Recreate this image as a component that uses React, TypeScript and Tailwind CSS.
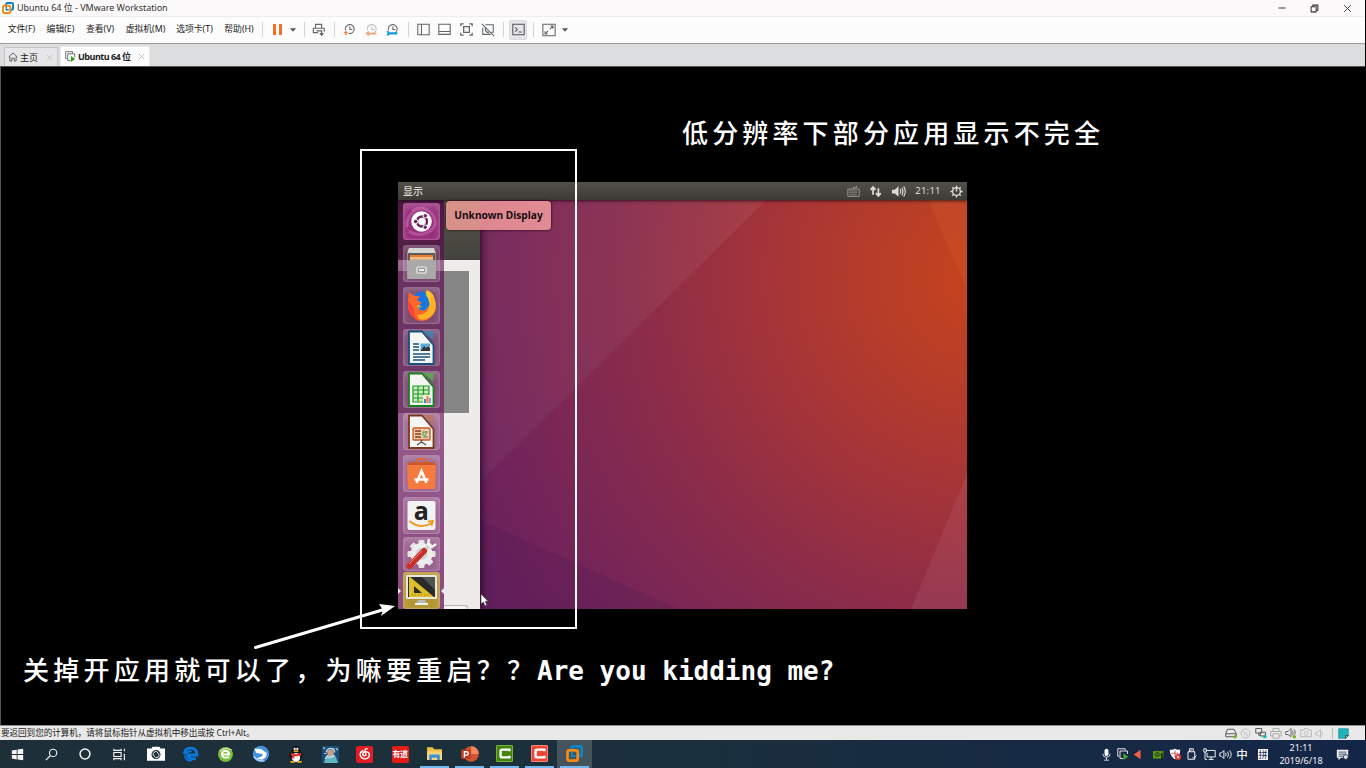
import React from 'react';

type Kids = { children?: React.ReactNode };

const UI = "font-['Noto_Sans','Noto_Sans_CJK_SC',sans-serif]";

function Ico({ s = 16, c = '', children }: Kids & { s?: number; c?: string }) {
  return (
    <svg width={s} height={s} viewBox="0 0 16 16" fill="none" stroke="currentColor" strokeWidth="1" className={`block shrink-0 ${c}`}>
      {children}
    </svg>
  );
}

function Cell({ w, c = '', children }: Kids & { w: string; c?: string }) {
  return <div className={`flex h-full shrink-0 items-center justify-center ${w} ${c}`}>{children}</div>;
}

function VmLogo({ s }: { s: number }) {
  return (
    <Ico s={s}>
      <path d="M5.5 4.5V2.6Q5.5 1.3 6.8 1.3H13.4Q14.7 1.3 14.7 2.6V9Q14.7 10.3 13.4 10.3H11.5" stroke="#0d86c8" strokeWidth="2.6" />
      <rect x="1.4" y="5" width="9.6" height="9.6" rx="1.4" stroke="#f38b14" strokeWidth="2.6" />
      <path d="M5.6 6V10.3H9" stroke="#0d86c8" strokeWidth="1.8" />
    </Ico>
  );
}

const Caret = () => (
  <svg width="6" height="4" viewBox="0 0 6 4" className="block shrink-0"><path d="M0 .3H6L3 3.7Z" fill="#555" /></svg>
);
const Sep = () => <div className="h-[15px] w-px bg-[#d4d4d4]" />;

function Clock({ soft = false, children }: Kids & { soft?: boolean }) {
  return (
    <Ico s={13}>
      <g stroke={soft ? '#b9bec2' : '#666'} strokeWidth="1.3">
        <path d="M3 9A5.5 5.5 0 1 1 7 12.8" />
        <path d="M8.5 4V8H11.5" />
      </g>
      {children}
    </Ico>
  );
}

function TitleBar() {
  return (
    <div className="flex h-[16px] items-center bg-[#fbf9f9] text-[#333]">
      <Cell w="w-[15px]" c="pb-px"><VmLogo s={12} /></Cell>
      <div className="ml-[2px] flex-1 whitespace-nowrap text-[9px] leading-[16px] tracking-[-0.03px]">Ubuntu 64 位 - VMware Workstation</div>
      <Cell w="w-8"><Ico s={8}><path d="M1 8H15" strokeWidth="2" /></Ico></Cell>
      <Cell w="w-8"><Ico s={9}><path d="M2 5H11V14H2ZM5 5V2H14V11H11" strokeWidth="1.8" /></Ico></Cell>
      <Cell w="w-[34px]"><Ico s={9}><path d="M2 2L14 14M14 2L2 14" strokeWidth="1.6" /></Ico></Cell>
      <div className="w-px" />
    </div>
  );
}

function MenuBar() {
  return (
    <div className="flex h-[27px] items-center border-t border-[#eeecec] bg-[#fcfcfc] pb-px text-[8.8px] leading-none whitespace-nowrap text-[#222]">
      <Cell w="w-[43px]">文件(F)</Cell>
      <Cell w="w-[35px]">编辑(E)</Cell>
      <Cell w="w-[44px]">查看(V)</Cell>
      <Cell w="w-[47px]">虚拟机(M)</Cell>
      <Cell w="w-[51px]">选项卡(T)</Cell>
      <Cell w="w-[38px]">帮助(H)</Cell>
      <Cell w="w-[9px]"><Sep /></Cell>
      <Cell w="w-[21px]"><div className="flex gap-[3px]"><i className="h-[11px] w-[3px] bg-[#f0702a]" /><i className="h-[11px] w-[3px] bg-[#f0702a]" /></div></Cell>
      <Cell w="w-[9px]"><Caret /></Cell>
      <Cell w="w-[14px]"><Sep /></Cell>
      <Cell w="w-[16px]" c="text-[#666]">
        <Ico s={14}><path d="M4 6V1.5H11V6M7 11H1.5V6H14V10M5 9H11M11 8V14" strokeWidth="1.3" /><path d="M8.3 11.5H13.7L11 15Z" fill="currentColor" stroke="none" /></Ico>
      </Cell>
      <Cell w="w-[15px]"><Sep /></Cell>
      <Cell w="w-[15px]"><Clock><path d="M1 12H6M3.5 9.5V15" stroke="#f0702a" strokeWidth="1.5" /></Clock></Cell>
      <Cell w="w-[28px]"><Clock soft><path d="M2 13H14M5 10.5L2 13L5 15.5" stroke="#f5a57d" strokeWidth="2" /></Clock></Cell>
      <Cell w="w-[15px]"><Clock><path d="M1.5 10L4 12.5L1.5 15M4 12.7H14" stroke="#12a0d4" strokeWidth="2.6" /></Clock></Cell>
      <Cell w="w-[16px]"><Sep /></Cell>
      <Cell w="w-[14px]" c="text-[#606468]"><Ico s={13}><path d="M1 1.5H15V14.5H1ZM5.5 1.5V14.5" strokeWidth="1.3" /></Ico></Cell>
      <Cell w="w-[29px]" c="text-[#606468]"><Ico s={13}><path d="M1 1.5H15V14H1ZM1 10.5H15" strokeWidth="1.3" /></Ico></Cell>
      <Cell w="w-[14px]" c="text-[#606468]"><Ico s={13}><path d="M1 4V1H4.5M11.5 1H15V4M15 12V15H11.5M4.5 15H1V12M4.5 4.5H11.5V11.5H4.5Z" strokeWidth="1.5" /></Ico></Cell>
      <Cell w="w-[29px]" c="text-[#606468]"><Ico s={14}><path d="M1 1L15 15M5 2H14V10.5H12M2 5V13H11M5 5V8Q6 11 9 11" strokeWidth="1.2" /></Ico></Cell>
      <Cell w="w-[2px]"><Sep /></Cell>
      <Cell w="w-[28px]" c="text-[#4f5357]">
        <div className="flex h-[20px] w-[18px] items-center justify-center rounded-[2px] border border-[#dcdce0] bg-[#e6e6ea]">
          <Ico s={13}><path d="M1 1.5H15V14.5H1ZM4 5.5L6.5 8L4 10.5M8 11H12" strokeWidth="1.3" /></Ico>
        </div>
      </Cell>
      <Cell w="w-[3px]"><Sep /></Cell>
      <Cell w="w-[28px]" c="text-[#606468]"><Ico s={14}><path d="M1 1.5H15V14.5H1ZM9 7L12.5 3.5M9.5 3.5H12.5V6.5M7 9L3.5 12.5M3.5 9.5V12.5H6.5" strokeWidth="1.2" /></Ico></Cell>
      <Cell w="w-[3px]"><Caret /></Cell>
    </div>
  );
}

function TabBar() {
  return (
    <div className="flex h-6 items-end border-t border-t-[#999b9c] border-b border-b-[#555] bg-[#dcdddf] pl-1 text-[9px] leading-none whitespace-nowrap text-[#222]">
      <div className="flex h-[19px] w-[54px] items-center border border-b-0 border-[#c3c4c6] bg-[#e7e7e9] pl-[3px]">
        <Ico s={10} c="text-[#555]"><path d="M1 8L8 1.5L15 8M3 7V14.5H6V10H10V14.5H13V7" strokeWidth="1.4" /></Ico>
        <span className="ml-[2px]">主页</span>
        <Ico s={7} c="ml-[8px] text-[#bbb]"><path d="M2 2L14 14M14 2L2 14" strokeWidth="2" /></Ico>
      </div>
      <div className="ml-[2px] flex h-5 w-[90px] items-center border border-b-0 border-[#e9e9ea] bg-[#fdfdfd] pl-[4px]">
        <Ico s={11} c="text-[#555]"><path d="M11 3V1H1V11H3M4 4H14V9M4 4V14H8" strokeWidth="1.2" /><path d="M8.5 7L15 11.5L8.5 16Z" fill="#3b9a28" stroke="none" /></Ico>
        <b className="ml-[2px] text-[9px] tracking-[-0.48px]">Ubuntu 64 位</b>
        <Ico s={7} c="ml-[7px] text-[#aaa]"><path d="M2 2L14 14M14 2L2 14" strokeWidth="1.7" /></Ico>
      </div>
    </div>
  );
}

function Tile({ children, bg = 'bg-white/10', h = 'h-[37px]', mt = 'mt-[5px]' }: Kids & { bg?: string; h?: string; mt?: string }) {
  return (
    <div className={`flex w-[37px] shrink-0 items-center justify-center rounded-[3px] border border-white/20 ${bg} ${h} ${mt} shadow-[inset_0_3px_7px_rgba(255,255,255,0.24)]`}>
      <svg width="35" height="35" viewBox="0 0 35 35" className="shrink-0 overflow-visible">{children}</svg>
    </div>
  );
}

function Doc({ c, fold, children }: Kids & { c: string; fold: string }) {
  return (
    <>
      <path d="M19 1H29.5V10Z" fill={fold} opacity=".8" />
      <path d="M5 1.5H18L29.5 15V34H5Z" fill="#f5f5f3" stroke={c} strokeWidth="1.8" strokeLinejoin="round" />
      {children}
    </>
  );
}

const spokes = [0, 45, 90, 135, 180, 225, 270, 315];

function Launcher() {
  return (
    <div className="relative flex w-[46px] shrink-0 flex-col items-center bg-[linear-gradient(180deg,#4b193f_0,#55204a_60px,#98658d_60px,#98658d_71px,#6a3160_71px,#733b69_213px,#965c8b_213px,#8c4a80_100%)]">
      <Tile bg="bg-[#982c7b]" mt="mt-[3px]">
        <path d="M3 23C3 11 10 4 21 4M5 27C12 33 28 31 31 20M8 7C18 0 32 7 31 21" fill="none" stroke="#e6a9d7" strokeWidth="3" opacity=".3" />
        <circle cx="17.5" cy="17.5" r="10.3" fill="#fff" />
        <circle cx="18" cy="17.5" r="5" fill="none" stroke="#6c205b" strokeWidth="2.4" />
        <g fill="#6c205b" stroke="#fff" strokeWidth="1"><circle cx="11.6" cy="17.5" r="2.2" /><circle cx="21.2" cy="11.8" r="2.2" /><circle cx="21.2" cy="23.2" r="2.2" /></g>
      </Tile>
      <Tile>
        <path d="M5 2H30L31.5 6V33H3.5V6Z" fill="#d5d5d3" />
        <path d="M4 7H31V16H4Z" fill="#5e5a56" />
        <path d="M6 9H29V15H6Z" fill="#e57b35" /><path d="M6 11H29V15H6Z" fill="#f4bd7f" />
        <path d="M3.5 15L6 13.5H29L31.5 15V33H3.5Z" fill="#aaa9a8" />
        <rect x="13" y="21" width="9" height="6" rx="1" fill="#999" stroke="#f1f1f1" strokeWidth="1.2" /><path d="M15 24H20" stroke="#eee" strokeWidth="2" />
      </Tile>
      <Tile>
        <circle cx="18" cy="18" r="14" fill="#fc652a" />
        <circle cx="18" cy="14" r="10.5" fill="#1976e1" />
        <path d="M11 17Q16 16 18 20L14 18Q17 26 24 24L27 17L31 15Q31 5 23 2Q20 5 24 10L26 17L19 25Z" fill="#ffc527" />
        <path d="M4 12L5 4L10 8L16 8L13 12L18 15L13 18Q15 24 21 22Q26 19 26 16L31 19Q29 33 17 33Q3 31 4 12Z" fill="#fb6728" />
        <path d="M13 27Q27 27 26 9L30 9Q35 23 26 29Q21 33 15 31Z" fill="#ffb322" />
        <path d="M4 13Q3 29 15 33Q9 28 10 21L6 15Z" fill="#f24438" />
      </Tile>
      <Tile>
        <Doc c="#17507c" fold="#3a87b5">
          <path d="M9 14H15M9 17H15M9 20H15M9 24H26M9 27H26M9 30H21" stroke="#135584" strokeWidth="1.5" />
          <rect x="16.5" y="13.5" width="9.5" height="7.5" fill="#5aa9d7" /><path d="M16.5 21L20 16L22 18L24 16.5L26 18V21Z" fill="#333" />
        </Doc>
      </Tile>
      <Tile>
        <Doc c="#19801f" fold="#52b446">
          <path d="M9 14H25V30H9Z" fill="#c6efbd" /><path d="M9 14H25V30H9ZM9 18H25M9 22H25M9 26H25M14 14V30M19.5 14V30" fill="none" stroke="#28962b" strokeWidth="1.2" />
          <rect x="19" y="23" width="8" height="8" fill="#f6eee1" /><path d="M21 31V27" stroke="#4285c7" strokeWidth="2" /><path d="M23.5 31V24" stroke="#f27b2b" strokeWidth="2" /><path d="M26 31V26" stroke="#4285c7" strokeWidth="1.4" />
        </Doc>
      </Tile>
      <Tile>
        <Doc c="#7d391c" fold="#be7751">
          <rect x="9" y="14" width="17" height="12" rx="1" fill="#f4caa8" stroke="#c25a27" strokeWidth="1.3" />
          <path d="M11 17H17M11 20H17M11 23H17" stroke="#86401f" strokeWidth="1.5" /><path d="M19 22V18H23L20 23H24" stroke="#6ba66b" strokeWidth="1.3" fill="none" /><path d="M17.5 26V28M13 31L17.5 28L22 31" stroke="#555" strokeWidth="1.4" fill="none" />
        </Doc>
      </Tile>
      <Tile>
        <path d="M13 9V5Q13 3 15 3H20Q22 3 22 5V9" fill="none" stroke="#df6538" strokeWidth="2" />
        <path d="M5 6H30L32 9H3Z" fill="#c9592e" /><path d="M3 9H32L31 33H4Z" fill="#f57a3e" />
        <path d="M12.5 27L17.5 15L22.5 27M10.5 23.5H24.5" fill="none" stroke="#fff" strokeWidth="2.5" />
      </Tile>
      <Tile>
        <rect x="3.5" y="3" width="28" height="29" rx="2" fill="#f3f3f3" />
        <text x="17.2" y="22" textAnchor="middle" fontSize="25" fontWeight="bold" fontFamily="Open Sans, sans-serif" fill="#242424">a</text>
        <path d="M5.5 23Q16 32 28 25M24 23.5L29 23L27.5 28" fill="none" stroke="#f39a1e" strokeWidth="1.8" />
      </Tile>
      <Tile h="h-[34px]" mt="mt-[3px]">
        {spokes.map((a) => <rect key={a} x="14.5" y="3" width="6" height="8" rx="1" fill="#e5e5e5" transform={`rotate(${a} 17.5 17)`} />)}
        <circle cx="17.5" cy="17" r="8.5" fill="#d3d3d2" stroke="#ededed" strokeWidth="5" />
        <path d="M21 13L26 8" stroke="#d5d5d5" strokeWidth="4" /><path d="M25 2L24 7L28 10L32 7" fill="none" stroke="#f1f1f1" strokeWidth="2.5" />
        <path d="M5.5 29L20 14" stroke="#c72f29" strokeWidth="6" strokeLinecap="round" /><path d="M5 27L18 14" stroke="#f28474" strokeWidth="1" />
      </Tile>
      <Tile bg="bg-[#b49531]" mt="mt-px">
        <path d="M14 27H21L23 31H12Z" fill="#b9b9b5" /><path d="M11 31H24" stroke="#eee" strokeWidth="2" />
        <rect x="2" y="2" width="31" height="24" rx="1.5" fill="#e7e7e2" /><rect x="4" y="4" width="27" height="20" fill="#292b2a" /><path d="M18 4H31V17Z" fill="#515351" />
        <path fillRule="evenodd" d="M5 3V24H30ZM10 13V20H18Z" fill="#dfbe27" /><path d="M8 22H26" stroke="#8c7517" strokeDasharray="1 2" />
      </Tile>
      <i className="absolute bottom-[15px] left-0 border-y-[3px] border-l-[3px] border-y-transparent border-l-[#eee]" />
      <i className="absolute right-0 bottom-[15px] border-y-[3px] border-r-[3px] border-y-transparent border-r-[#eee]" />
    </div>
  );
}

function Wallpaper() {
  return (
    <svg className="absolute inset-0 block" width="569" height="427" viewBox="0 0 569 427">
      <defs>
        <radialGradient id="warm" gradientUnits="userSpaceOnUse" cx="585" cy="95" r="580">
          <stop offset="0" stopColor="#c6431c" /><stop offset=".17" stopColor="#b93e28" /><stop offset=".38" stopColor="#a43439" />
          <stop offset=".6" stopColor="#8b2c4a" /><stop offset=".83" stopColor="#762558" /><stop offset="1" stopColor="#68215e" />
        </radialGradient>
        <linearGradient id="facet" x1="0" x2="1"><stop offset="0" stopColor="#fff" stopOpacity=".03" /><stop offset="1" stopColor="#fff" stopOpacity=".055" /></linearGradient>
      </defs>
      <path d="M0 0H569V427H0Z" fill="url(#warm)" />
      <path d="M0 18H368L82 300V18Z" fill="url(#facet)" />
      <path d="M530 18H569V108Z" fill="#ef873a" opacity=".12" />
      <path d="M569 292V427H513Z" fill="#e6a2ba" opacity=".1" />
      <path d="M82 338L280 427H82Z" fill="#34104d" opacity=".12" />
    </svg>
  );
}

function GuestDesktop() {
  return (
    <div className="relative h-[427px] w-[569px] overflow-hidden">
      <Wallpaper />
      <div className="relative z-10 flex h-[18px] items-center bg-[linear-gradient(#514f48,#3c3b37)] pl-[5px] text-[10px] text-[#dfdbd2] shadow-[0_1px_3px_rgba(20,0,20,0.7)]">
        <span className="flex-1 leading-none font-medium">显示</span>
        <Cell w="w-6" c="text-[#aaa79f]"><Ico s={13}><path d="M1 5H15V14H1ZM8 5V3H12V1" /><path d="M3 7.5H13M3 9.5H13M4 12H12" strokeDasharray="1.5 1" strokeWidth="1.3" /></Ico></Cell>
        <Cell w="w-[21px]"><Ico s={13}><path d="M5 12V3M2 6L5 2.5L8 6M11.5 4V13M8.5 10L11.5 13.5L14.5 10" strokeWidth="2.2" /></Ico></Cell>
        <Cell w="w-[25px]"><Ico s={15}><path d="M1 6H4L8 2.5V13.5L4 10H1Z" fill="currentColor" stroke="none" /><path d="M9.5 5.5Q11.5 8 9.5 10.5M11.5 4Q14 8 11.5 12M13.5 2.5Q17 8 13.5 13.5" strokeWidth="1.2" /></Ico></Cell>
        <Cell w="w-[34px]"><span className="text-[9.6px] tracking-[0.2px]">21:11</span></Cell>
        <Cell w="w-[22px]">
          <Ico s={13}><circle cx="8" cy="8" r="4.8" strokeWidth="1.7" /><path d="M8 1V8M8 13V15.5M.5 8H3M13 8H15.5M2.8 2.8L4.5 4.5M13.2 2.8L11.5 4.5M2.8 13.2L4.5 11.5M13.2 13.2L11.5 11.5" strokeWidth="1.8" /></Ico>
        </Cell>
      </div>
      <div className="relative flex h-[409px]">
        <Launcher />
        <div className="flex w-[36px] flex-col overflow-hidden bg-[#eeeceb] shadow-[1px_0_8px_rgba(20,0,30,0.9)]">
          <div className="h-[60px] bg-[linear-gradient(#55574a,#43423d)]" />
          <div className="mt-[11px] h-[142px] w-[25px] bg-[#868686]" />
          <div className="mt-auto h-1 w-6 rounded-tr-[3px] border-t border-r border-[#b5b3b1] bg-[#f5f4f3]" />
        </div>
      </div>
      <div className="absolute top-[19px] left-[48px] z-20 flex h-[29px] w-[105px] items-center justify-center rounded-[4px] bg-[linear-gradient(90deg,#d8918a_0,#d8918a_33px,#de8791_34px,#e18b95_100%)] text-[10.2px] font-bold whitespace-nowrap text-[#1a0d10] shadow-[0_0_2px_1px_rgba(30,0,20,0.55)]">Unknown Display</div>
      <svg className="absolute top-[411px] left-[82px]" width="9" height="14" viewBox="0 0 9 14"><path d="M1 1V11L3.3 9L5 13L6.8 12L5.2 8.3H8.2Z" fill="#fff" stroke="#333" strokeWidth=".6" /></svg>
    </div>
  );
}

function VmScreen() {
  return (
    <div className="relative h-[658px] border-l border-[#555] bg-black">
      <div className="flex pt-[115px] pl-[397px]"><GuestDesktop /></div>
      <div className="absolute top-[82px] left-[359px] z-20 h-[480px] w-[217px] border-2 border-white" />
      <svg className="absolute top-[530px] left-[250px] z-30" width="150" height="60" viewBox="0 0 150 60">
        <path d="M4.5 50.5L133 12.5" stroke="#fff" strokeWidth="3" strokeLinecap="round" /><path d="M144 9L128 7L132 13L130 19Z" fill="#fff" />
      </svg>
      <div className="absolute top-[45px] left-[681px] font-['Noto_Sans_CJK_SC',sans-serif] text-[26px] leading-10 font-medium tracking-[4.15px] whitespace-nowrap text-white">低分辨率下部分应用显示不完全</div>
      <div className="absolute top-[582px] left-[22px] flex items-baseline leading-10 whitespace-nowrap text-white">
        <span className="w-[514px] font-['Noto_Sans_CJK_SC',sans-serif] text-[26px] font-medium tracking-[4.25px]">关掉开应用就可以了，为嘛要重启？？</span>
        <span className="font-['DejaVu_Sans_Mono',monospace] text-[26px] font-bold">Are you kidding me?</span>
      </div>
    </div>
  );
}

function StatusBar() {
  return (
    <div className="flex h-[15px] items-center border-t border-[#8e8e8e] bg-[#e9e9e9] text-[8.6px] leading-none text-[#222]">
      <span className="flex-1 pl-px tracking-[-0.06px] whitespace-nowrap">要返回到您的计算机，请将鼠标指针从虚拟机中移出或按 Ctrl+Alt。</span>
      <Cell w="w-[15px]" c="text-[#555]"><Ico s={12}><path d="M3 3H12L15 9V13H1V9ZM1 9H15" strokeWidth="1.3" /><circle cx="13.5" cy="13" r="2.3" fill="#75b51d" stroke="none" /></Ico></Cell>
      <Cell w="w-[15px]" c="text-[#b6b6b6]"><Ico s={11}><circle cx="8" cy="8" r="6.5" strokeWidth="1.3" /><circle cx="8" cy="8" r="2" /><path d="M3 3L7 7M9 9L13 13" /></Ico></Cell>
      <Cell w="w-[15px]" c="text-[#555]"><Ico s={12}><path d="M1 2H9V8H1ZM5 8V11H8M7 7H14V12H7Z" strokeWidth="1.3" /><circle cx="13" cy="12.5" r="2.5" fill="#21b7bd" stroke="none" /></Ico></Cell>
      <Cell w="w-[15px]" c="text-[#aaa]"><Ico s={12}><path d="M4 6V2H12V6M4 12H1V6H15V12H12M4 9H12V15H4Z" strokeWidth="1.3" /></Ico></Cell>
      <Cell w="w-[15px]" c="text-[#666]"><Ico s={12}><path d="M1 6H4L8 2V13L4 10H1ZM10 5Q12 8 10 11M12 3Q15 7 13 10" strokeWidth="1.3" /><circle cx="12.5" cy="13" r="2.3" fill="#75b51d" stroke="none" /></Ico></Cell>
      <Cell w="w-[15px]" c="text-[#b6b6b6]"><Ico s={12}><path d="M1 4H5L6 2H10L11 4H15V13H1Z" strokeWidth="1.3" /><circle cx="8" cy="8.5" r="2.5" /></Ico></Cell>
      <Cell w="w-[15px]" c="text-[#b6b6b6]"><Ico s={11}><path d="M1 6H4L8 2V14L4 10H1ZM10 5Q12 8 10 11" strokeWidth="1.3" /></Ico></Cell>
      <Cell w="w-[8px]"><i className="h-[11px] w-px bg-[#bbb]" /></Cell>
      <Cell w="w-[15px]"><Ico s={11}><path d="M1 1H15V11L11 15H1Z" fill="#20b5bb" stroke="#168c91" /><path d="M15 11H11V15Z" fill="#d6f5f5" /></Ico></Cell>
      <div className="w-[14px]" />
    </div>
  );
}

function Bubble({ c }: { c: string }) {
  return (
    <div className={`flex size-[17px] items-center justify-center rounded-[1px] border ${c}`}>
      <Ico s={13}><path d="M14 5.2V3.2H5Q3.2 3.2 3.2 5V11Q3.2 12.8 5 12.8H14V10.8" stroke="#fff" strokeWidth="3" /></Ico>
    </div>
  );
}

function Running({ children, c = '' }: Kids & { c?: string }) {
  return (
    <div className={`flex h-full w-[35px] shrink-0 flex-col items-center ${c}`}>
      <div className="flex flex-1 items-center pt-px">{children}</div>
      <i className="h-[2px] w-[29px] bg-[#71b9f2]" />
    </div>
  );
}

function Taskbar() {
  return (
    <div className="flex h-7 items-center bg-[linear-gradient(90deg,#1d2f39_0,#1b303c_45%,#172a43_75%,#142648_100%)] text-[#f4f4f4]">
      <Cell w="w-[34px]"><Ico s={13}><path d="M1 3L7 2V7.5H1ZM8 1.8L15 1V7.5H8ZM1 8.5H7V14L1 13ZM8 8.5H15V15L8 14.2Z" fill="currentColor" stroke="none" /></Ico></Cell>
      <Cell w="w-[34px]"><Ico s={13}><circle cx="10" cy="6" r="4.5" strokeWidth="1.4" /><path d="M6.8 9.2L1 15" strokeWidth="1.4" /></Ico></Cell>
      <Cell w="w-[34px]"><Ico s={12}><circle cx="8" cy="8" r="6.6" strokeWidth="2" /></Ico></Cell>
      <Cell w="w-[34px]"><Ico s={13}><path d="M1 1V3H10V1M1 15V13H10V15M1 5.5H10V10.5H1ZM14 1V4M14 7V15" strokeWidth="1.4" /></Ico></Cell>
      <Cell w="w-[39px]"><Ico s={18}><path d="M0 3H4L5 1.5H11L12 3H16V14H0Z" fill="#fff" stroke="none" /><circle cx="8" cy="8.5" r="4" fill="#1d2f39" stroke="none" /><path d="M5.5 9A2.8 2.8 0 0 1 8.5 5.7L11 9Q10 11.5 8 11.3Z" fill="#1d2f39" stroke="#fff" strokeWidth=".8" /></Ico></Cell>
      <Cell w="w-[31px]"><Ico s={17}><path d="M2 7Q3 2 8 2Q14 2 14 8V8.5H5.5Q6 13 13 11.7" stroke="#0b78db" strokeWidth="2.8" /><path d="M2 8Q4 5 9 5M3 9Q3 14 9 14" stroke="#0b78db" strokeWidth="1.8" /></Ico></Cell>
      <Cell w="w-[39px]"><Ico s={17}><circle cx="8" cy="8" r="7" fill="#78bd3b" stroke="none" /><path d="M4.5 8H11.5Q11 4.5 8 4.5T4.5 8Q5 12 11.5 10.5" stroke="#fff" strokeWidth="1.8" /><path d="M2 5Q8 0 14 4" stroke="#c8e99a" /></Ico></Cell>
      <Cell w="w-[31px]"><Ico s={18}><circle cx="8" cy="8" r="7.3" fill="#4492df" stroke="none" /><path d="M2 3L8 3.5L13 7Q13.5 11 9 13L4 12L9 10L9.5 8L4 7Z" fill="#fff" stroke="none" /><path d="M1.5 10Q5 15 11 14" stroke="#acd6fb" strokeWidth="1.2" /></Ico></Cell>
      <Cell w="w-[39px]"><Ico s={18}><ellipse cx="8" cy="9" rx="6" ry="5.5" fill="#15191c" stroke="none" /><circle cx="8" cy="4.3" r="3.8" fill="#15191c" stroke="none" /><ellipse cx="8" cy="11" rx="3.7" ry="4" fill="#fff" stroke="none" /><circle cx="6.8" cy="3.5" r="1" fill="#fff" stroke="none" /><circle cx="9.2" cy="3.5" r="1" fill="#fff" stroke="none" /><path d="M6 5.5H10" stroke="#f5b520" strokeWidth="1.3" /><path d="M3.5 8Q8 10 12.5 8M5.5 9V12" stroke="#e53431" strokeWidth="2" /><path d="M3 15H7M9 15H13" stroke="#f5a91e" strokeWidth="1.7" /></Ico></Cell>
      <Cell w="w-[31px]"><Ico s={17}><path d="M0 0H16V16H0Z" fill="#19507b" stroke="none" /><path d="M2 16L4 9L8 7L13 10L15 16Z" fill="#5fb7c6" stroke="none" /><circle cx="8" cy="6.5" r="3" fill="#ca9f86" stroke="none" /><path d="M4 6Q5 1 11 3L12 6M6 11L12 9M3 12L6 9" stroke="#d0d9df" strokeWidth="1.4" /><path d="M1 2H3M13 2L15 4M2 7H4" stroke="#a9dced" /></Ico></Cell>
      <Cell w="w-[37px]"><div className="flex size-[17px] items-center justify-center rounded-[2px] bg-[#e31b25]"><Ico s={14}><path d="M6 4Q2 6 2.5 9.5Q4 14 8.5 13.5Q13 13 13 8.5Q12 5 8 5.3Q5 6 5.5 9Q7 11 9 9.5L8 3.5Q8 1.5 11 2" stroke="#fff" strokeWidth="1.6" /></Ico></div></Cell>
      <Cell w="w-[34px]"><div className="flex size-[17px] items-center justify-center rounded-[2px] bg-[#e31c18] text-[8px] leading-none font-bold tracking-[-0.5px] whitespace-nowrap text-white">有道</div></Cell>
      <Running><Ico s={17}><path d="M1 2H6L8 4H15V14H1Z" fill="#f5bd42" stroke="none" /><path d="M1 6H15V14H1Z" fill="#fbd574" stroke="none" /><path d="M3 14V9H13V14H10.5V12H5.5V14Z" fill="#3e91dc" stroke="none" /></Ico></Running>
      <Running><Ico s={18}><circle cx="9" cy="8" r="6.8" fill="#d4512f" stroke="none" /><path d="M9 1.2A6.8 6.8 0 0 1 15.8 8H9Z" fill="#f28761" stroke="none" /><rect x="0" y="4" width="8.5" height="8.5" rx="1" fill="#b93a20" stroke="none" /><path d="M3 11V6H5Q6.5 6 6.5 7.5T5 9H3" stroke="#fff" strokeWidth="1.2" /></Ico></Running>
      <Running><Bubble c="border-[#79ae3b] bg-[#41860b]" /></Running>
      <Running><Bubble c="border-[#f28672] bg-[#e94835]" /></Running>
      <Running c="bg-[#44535c]"><VmLogo s={17} /></Running>
      <div className="flex-1" />
      <Cell w="w-[18px]"><Ico s={13}><rect x="5.5" y="1" width="5" height="9" rx="2.5" fill="currentColor" stroke="none" /><path d="M3.5 7Q3.5 11.5 8 11.5T12.5 7M8 11.5V15M5 15H11" /></Ico></Cell>
      <Cell w="w-4"><Ico s={12}><path d="M11 3V1H1V11H3M4 4H14V8M4 4V14H8" strokeWidth="1.2" /><path d="M8.5 7L15 11.5L8.5 16Z" fill="#43aa31" stroke="none" /></Ico></Cell>
      <Cell w="w-[15px]"><Ico s={11}><path d="M1 8L11 1V15Z" fill="#f0613f" stroke="none" /></Ico></Cell>
      <Cell w="w-6"><Ico s={11}><path d="M0 3H15V14H0Z" fill="#5c9810" stroke="none" /><path d="M2 8Q6 3 11 8Q6 13 2 8M6 5V11" stroke="#1d361b" strokeWidth="1.2" /><path d="M13 6V15" stroke="#111" strokeWidth="2" /></Ico></Cell>
      <Cell w="w-[10px]"><Ico s={12}><path d="M1 2Q5 3 8 1Q11 3 15 2Q15 11 8 15Q1 11 1 2Z" fill="#fff" stroke="none" /><path d="M8 3V13M3 7H13" stroke="#c33" /><circle cx="12" cy="12" r="4" fill="#df3b34" stroke="none" /><path d="M10.5 10.5L13.5 13.5M13.5 10.5L10.5 13.5" stroke="#fff" /></Ico></Cell>
      <Cell w="w-[22px]"><Ico s={12}><path d="M6 5V1H11V5M4 5H13V15H4ZM8 2V4M10 12L12 14L15 10" strokeWidth="1.3" /></Ico></Cell>
      <Cell w="w-[14px]"><Ico s={13}><path d="M4 3H15V11H5V6M1 1V5H4V1ZM10 11V14M7 14H13M2.5 5V14H5" strokeWidth="1.2" /></Ico></Cell>
      <Cell w="w-[18px]"><Ico s={13}><path d="M1 6H3L6 3V13L3 10H1ZM8 6Q9.5 8 8 10M10.5 4.5Q13 8 10.5 11.5M13 3Q17 8 13 13" strokeWidth="1.2" /></Ico></Cell>
      <Cell w="w-4" c="pt-px text-[11.5px] leading-none font-medium">中</Cell>
      <Cell w="w-[26px]"><div className="flex h-[11px] w-[10px] items-center justify-center bg-[#f4f4f4] text-[9px] leading-none font-normal text-[#182b45]">拼</div></Cell>
      <Cell w="w-[50px]"><div className="text-center text-[9px] leading-[13px] whitespace-nowrap"><div>21:11</div><div className="tracking-[0.05px]">2019/6/18</div></div></Cell>
      <Cell w="w-8"><Ico s={13}><path d="M1 2H15V12H6L3 15V12H1Z" fill="currentColor" stroke="none" /><path d="M3 5H13M3 7.5H13M3 10H9" stroke="#182b48" /><circle cx="12" cy="11" r="3" fill="#ddd" stroke="#182b48" /></Ico></Cell>
      <div className="w-2" />
    </div>
  );
}

export default function App() {
  return (
    <div className={`flex h-[768px] w-[1366px] flex-col overflow-hidden bg-black ${UI}`}>
      <div className="mr-px flex flex-col">
        <TitleBar />
        <MenuBar />
        <TabBar />
      </div>
      <VmScreen />
      <div className="mr-px"><StatusBar /></div>
      <Taskbar />
    </div>
  );
}
